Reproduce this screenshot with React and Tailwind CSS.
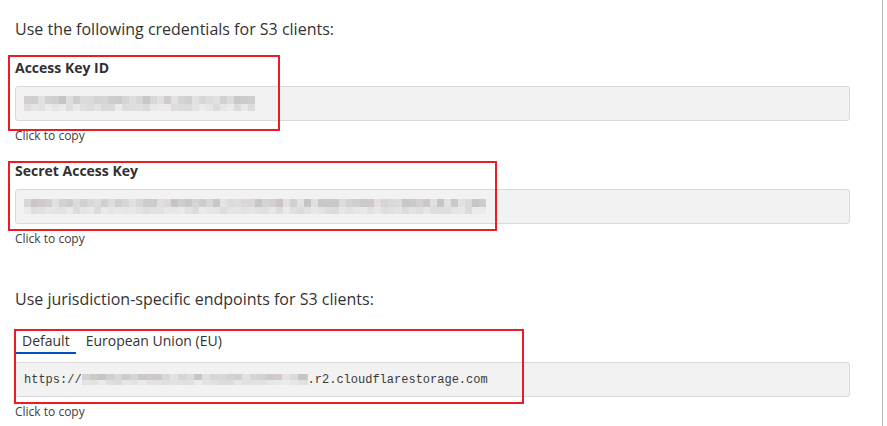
import React from "react";

function rand(seed) {
  let s = seed;
  return () => {
    s = (s * 9301 + 49297) % 233280;
    return s / 233280;
  };
}

function Mosaic({ width, height = 15, seed = 1, cell = 7 }) {
  const r = rand(seed);
  const cols = Math.ceil(width / cell);
  const half = Math.round(height / 2);
  const rects = [];
  for (let i = 0; i < cols; i++) {
    const a = Math.round(196 + r() * 30);
    const b = Math.round(218 + r() * 18);
    const t = r() > 0.8 ? 6 : 0;
    rects.push(
      <rect key={"a" + i} x={i * cell} y={0} width={cell} height={half} fill={`rgb(${a + t},${a},${a})`} />,
      <rect key={"b" + i} x={i * cell} y={half} width={cell} height={height - half} fill={`rgb(${b},${b},${b + (t ? 4 : 0)})`} />
    );
  }
  return (
    <svg width={width} height={height} className="block shrink-0">
      {rects}
    </svg>
  );
}

function KeyField({ label, mosaicWidth, seed }) {
  return (
    <div>
      <div className="text-[14px] leading-5 font-bold text-[#313131]">{label}</div>
      <div className="mt-[8px] w-[835px] h-[35px] bg-[#f2f2f2] border border-[#d9d9d9] rounded-[3px] flex items-center pl-[8px]">
        <Mosaic width={mosaicWidth} seed={seed} />
      </div>
      <div className="mt-[7px] text-[12px] leading-4 text-[#3d3d3d]">Click to copy</div>
    </div>
  );
}

export default function App() {
  return (
    <div
      className="relative w-[883px] h-[426px] bg-white border-r border-[#b5b5b5] pl-[15px] pt-[17px] overflow-hidden"
      style={{ fontFamily: '"Open Sans", "Noto Sans", sans-serif' }}
    >
      <div className="text-[16px] leading-6 text-[#333]">Use the following credentials for S3 clients:</div>

      <div className="mt-[17px]">
        <KeyField label="Access Key ID" mosaicWidth={231} seed={3} />
      </div>
      <div className="mt-[17px]">
        <KeyField label="Secret Access Key" mosaicWidth={462} seed={11} />
      </div>

      <div className="mt-[40px] text-[16px] leading-6 text-[#333]">
        Use jurisdiction-specific endpoints for S3 clients:
      </div>

      <div className="mt-[20px]">
        <div className="flex items-end gap-[10px] text-[14px] leading-5 text-[#333]">
          <div className="ml-px px-[6px] pb-[1px] border-b-2 border-[#0051c3]">Default</div>
          <div className="pb-[3px]">European Union (EU)</div>
        </div>
        <div
          className="mt-[8px] w-[835px] h-[35px] bg-[#f2f2f2] border border-[#d9d9d9] rounded-[3px] flex items-center pl-[8px] text-[12px] text-[#3a3a3a]"
          style={{ fontFamily: '"Liberation Mono", "Courier New", monospace' }}
        >
          <span>https://</span>
          <Mosaic width={226} height={11} seed={7} cell={8} />
          <span>.r2.cloudflarestorage.com</span>
        </div>
        <div className="mt-[7px] text-[12px] leading-4 text-[#3d3d3d]">Click to copy</div>
      </div>

      {/* red annotation boxes */}
      <div className="absolute left-[8px] top-[55px] w-[272px] h-[76px] border-2 border-[#ec1c24]" />
      <div className="absolute left-[8px] top-[161px] w-[489px] h-[70px] border-2 border-[#ec1c24]" />
      <div className="absolute left-[14px] top-[329px] w-[510px] h-[75px] border-2 border-[#ec1c24]" />
    </div>
  );
}
